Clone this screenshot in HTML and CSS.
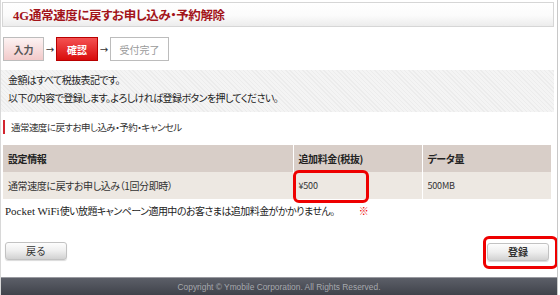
FILE: index.html
```html
<!DOCTYPE html>
<html lang="ja">
<head>
<meta charset="utf-8">
<title>4G通常速度に戻すお申し込み・予約解除</title>
<link rel="stylesheet" href="styles.css">
</head>
<body>
<div class="page">
  <h1 class="title"><span class="lat">4G</span>通常速度に戻すお申し込み・予約解除</h1>

  <div class="steps">
    <div class="step step-done">入力</div>
    <span class="arrow">→</span>
    <div class="step step-current">確認</div>
    <span class="arrow">→</span>
    <div class="step step-next">受付完了</div>
  </div>

  <div class="info">
    <p>金額はすべて税抜表記です。</p>
    <p>以下の内容で登録します。よろしければ登録ボタンを押してください。</p>
  </div>

  <h2 class="section">通常速度に戻すお申し込み・予約・キャンセル</h2>

  <table class="plan">
    <thead>
      <tr>
        <th class="c1">設定情報</th>
        <th class="c2">追加料金(税抜)</th>
        <th class="c3">データ量</th>
      </tr>
    </thead>
    <tbody>
      <tr>
        <td class="c1">通常速度に戻すお申し込み（1回分即時）</td>
        <td class="c2"><span class="hl-cell"></span>¥500</td>
        <td class="c3">500MB</td>
      </tr>
    </tbody>
  </table>

  <p class="note"><span class="lat">Pocket WiFi</span>使い放題キャンペーン適用中のお客さまは追加料金がかかりません。<span class="mark">※</span></p>

  <div class="actions">
    <button class="btn">戻る</button>
    <button class="btn btn-submit">登録<span class="hl-btn"></span></button>
  </div>

  <footer class="footer">Copyright © Ymobile Corporation. All Rights Reserved.</footer>
</div>
</body>
</html>
```
FILE: styles.css
```css
* { box-sizing: border-box; }

body {
  margin: 0;
  background: #fff;
  font-family: "Noto Sans CJK JP", "Noto Sans", sans-serif;
  font-size: 10px;
  color: #222;
  font-feature-settings: "palt";
}

.page {
  width: 558px;
  height: 295px;
  border-left: 1px solid #d8d8d8;
  border-right: 1px solid #c8c8c8;
  padding-top: 2px;
  display: flex;
  flex-direction: column;
  overflow: hidden;
}

.lat { font-family: "Liberation Serif", serif; letter-spacing: 0; }

.title {
  margin: 0 3px 0 1px;
  height: 25px;
  border: 1px solid #d6d6d6;
  background: linear-gradient(#ffffff 0%, #fbfbfb 55%, #ececec 100%);
  color: #a3141a;
  font-size: 12.5px;
  font-weight: bold;
  line-height: 23px;
  padding-left: 10px;
  letter-spacing: -0.4px;
}

.steps {
  display: flex;
  align-items: center;
  margin: 10px 0 0 2px;
  height: 24px;
}

.step {
  height: 24px;
  border: 1px solid #bcbcbc;
  display: flex;
  align-items: center;
  justify-content: center;
  font-size: 10px;
  font-weight: bold;
}

.step-done {
  width: 41px;
  background: linear-gradient(#fdf3f3, #f2c9c9);
  color: #555;
}

.step-current {
  width: 42px;
  background: linear-gradient(#f45252, #d80c0c);
  border-color: #b80000;
  color: #fff;
}

.step-next {
  width: 59px;
  background: #fff;
  color: #9a9a9a;
  font-weight: normal;
}

.arrow {
  width: 12px;
  text-align: center;
  font-size: 10px;
  color: #333;
  font-family: "DejaVu Sans", sans-serif;
}

.info {
  margin: 9px 3px 0 -1px;
  padding: 1px 0 5px 8px;
  background: repeating-linear-gradient(45deg, #ececec 0 1px, #f4f4f4 1px 3px);
}

.info p {
  margin: 0;
  line-height: 18px;
  color: #222;
  letter-spacing: -0.6px;
}

.section {
  margin: 8px 0 0 2px;
  height: 14px;
  border-left: 2px solid #d32630;
  padding-left: 6px;
  font-size: 9.5px;
  font-weight: normal;
  line-height: 14px;
  color: #333;
  letter-spacing: -0.55px;
}

.plan {
  margin: 11px 0 0 2px;
  width: 548px;
  border-collapse: collapse;
  table-layout: fixed;
}

.plan th, .plan td {
  height: 27px;
  padding: 0 0 0 5px;
  text-align: left;
  border-left: 1px solid #fff;
  font-size: 10px;
  letter-spacing: -0.4px;
}

.plan th:first-child, .plan td:first-child { border-left: 0; }

.plan th {
  background: #d8cec8;
  font-weight: bold;
  color: #222;
}

.plan td {
  background: #ede8e2;
  color: #333;
}

.plan td.c2, .plan td.c3 { font-size: 9px; letter-spacing: -0.2px; }

.plan .c1 { width: 290px; }
.plan .c2 { width: 129px; position: relative; }
.plan .c3 { width: 129px; }

.hl-cell {
  position: absolute;
  left: -1px;
  top: -2px;
  width: 76px;
  height: 33px;
  border: 3px solid #ee0000;
  border-radius: 6px;
}

.note {
  margin: 5px 0 0 4px;
  line-height: 14px;
  font-size: 10px;
  color: #222;
  letter-spacing: -0.55px;
}

.note .lat { font-size: 11px; }

.mark {
  color: #ee0000;
  margin-left: 24px;
  font-size: 10px;
}

.actions {
  display: flex;
  justify-content: space-between;
  margin: 24px 8px 0 4px;
}

.btn {
  position: relative;
  width: 62px;
  height: 18px;
  border: 1px solid #c2c2c2;
  border-radius: 3px;
  background: linear-gradient(#fdfdfd 0%, #eeeeee 50%, #d2d2d2 100%);
  box-shadow: 0 1px 1px rgba(0,0,0,0.15);
  font-family: "Noto Sans CJK JP", sans-serif;
  font-size: 10px;
  color: #333;
  padding: 0;
  line-height: 16px;
}

.btn-submit { font-weight: bold; margin-top: 1px; }

.hl-btn {
  position: absolute;
  left: -5px;
  top: -8px;
  width: 75px;
  height: 33px;
  border: 3px solid #ee0000;
  border-radius: 6px;
}

.footer {
  margin-top: auto;
  height: 18px;
  border-top: 1px solid #999aa0;
  background: linear-gradient(#5c5f68, #40434b);
  color: #a6a8ad;
  font-family: "Liberation Sans", sans-serif;
  font-size: 8.4px;
  line-height: 18px;
  text-align: center;
}
```
